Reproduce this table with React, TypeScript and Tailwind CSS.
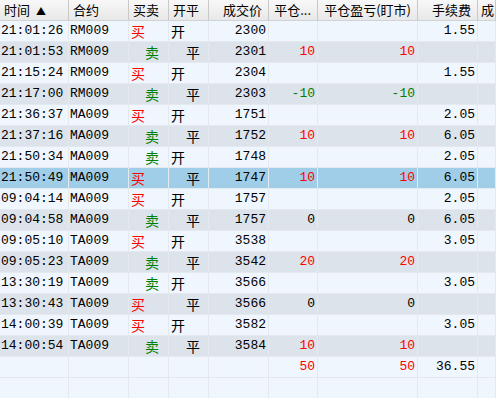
type Trade = {
    time: string;
    code: string;
    side: 'buy' | 'sell';
    open: boolean;
    price: string;
    close?: string;
    pnl?: string;
    fee?: string;
};

const trades: Trade[] = [
    { time: '21:01:26', code: 'RM009', side: 'buy', open: true, price: '2300', fee: '1.55' },
    { time: '21:01:53', code: 'RM009', side: 'sell', open: false, price: '2301', close: '10', pnl: '10' },
    { time: '21:15:24', code: 'RM009', side: 'buy', open: true, price: '2304', fee: '1.55' },
    { time: '21:17:00', code: 'RM009', side: 'sell', open: false, price: '2303', close: '-10', pnl: '-10' },
    { time: '21:36:37', code: 'MA009', side: 'buy', open: true, price: '1751', fee: '2.05' },
    { time: '21:37:16', code: 'MA009', side: 'sell', open: false, price: '1752', close: '10', pnl: '10', fee: '6.05' },
    { time: '21:50:34', code: 'MA009', side: 'sell', open: true, price: '1748', fee: '2.05' },
    { time: '21:50:49', code: 'MA009', side: 'buy', open: false, price: '1747', close: '10', pnl: '10', fee: '6.05' },
    { time: '09:04:14', code: 'MA009', side: 'buy', open: true, price: '1757', fee: '2.05' },
    { time: '09:04:58', code: 'MA009', side: 'sell', open: false, price: '1757', close: '0', pnl: '0', fee: '6.05' },
    { time: '09:05:10', code: 'TA009', side: 'buy', open: true, price: '3538', fee: '3.05' },
    { time: '09:05:23', code: 'TA009', side: 'sell', open: false, price: '3542', close: '20', pnl: '20' },
    { time: '13:30:19', code: 'TA009', side: 'sell', open: true, price: '3566', fee: '3.05' },
    { time: '13:30:43', code: 'TA009', side: 'buy', open: false, price: '3566', close: '0', pnl: '0' },
    { time: '14:00:39', code: 'TA009', side: 'buy', open: true, price: '3582', fee: '3.05' },
    { time: '14:00:54', code: 'TA009', side: 'sell', open: false, price: '3584', close: '10', pnl: '10' },
];

const SELECTED = 7;

const cols = 'grid grid-cols-[69px_60px_40px_40px_60px_49px_100px_60px_1fr]';
const mono = "[font-family:'Liberation_Mono','Noto_Sans_CJK_SC',monospace]";
const cjk = "[font-family:'Noto_Sans_CJK_SC',sans-serif]";

const pnlColor = (v?: string) => {
    if (!v) return '';
    if (v.startsWith('-')) return 'text-[#008000]';
    if (v === '0') return 'text-black';
    return 'text-[#ff0000]';
};

const Cell = ({ children, className = '' }: { children?: React.ReactNode; className?: string }) => (
    <div className={`h-full flex items-center border-r border-[#e4e9ef] overflow-hidden whitespace-nowrap ${className}`}>
        {children}
    </div>
);

export default function App() {
    return (
        <div className="w-[496px] h-[398px] overflow-hidden bg-[#f0f6fd] text-[13px] text-black">
            {/* header */}
            <div className={`${cols} h-[21px] border-b border-[#cfd3d8] bg-gradient-to-b from-[#f8f8f8] to-[#e8e8e8] ${cjk}`}>
                {['时间', '合约', '买卖', '开平', '成交价', '平仓...', '平仓盈亏(盯市)', '手续费', '成'].map((h, i) => (
                    <div
                        key={h}
                        className={`h-full flex items-center border-r border-[#c9c9c9] overflow-hidden whitespace-nowrap ${
                            i < 4 ? 'pl-[4px]' : i === 8 ? 'pl-[3px]' : 'justify-end pr-[6px]'
                        }`}
                    >
                        {h}
                        {i === 0 && <span className="ml-[6px] text-[10px]">▲</span>}
                    </div>
                ))}
            </div>

            {trades.map((t, i) => (
                <div
                    key={t.time}
                    className={`${cols} h-[21px] border-b border-[#e4e9ef] ${mono} ${
                        i === SELECTED ? 'bg-[#a0cde7]' : i % 2 === 1 ? 'bg-[#dde3eb]' : 'bg-[#f0f6fd]'
                    }`}
                >
                    <Cell className="pl-[1px]">{t.time}</Cell>
                    <Cell className="pl-[1px]">{t.code}</Cell>
                    <Cell className={t.side === 'buy' ? 'pl-[2px] text-[#ff0000]' : 'pl-[16px] text-[#008000]'}>
                        <span className={`${cjk} text-[14px]`}>{t.side === 'buy' ? '买' : '卖'}</span>
                    </Cell>
                    <Cell className={t.open ? 'pl-[2px]' : 'pl-[17px]'}>
                        <span className={`${cjk} text-[14px]`}>{t.open ? '开' : '平'}</span>
                    </Cell>
                    <Cell className="justify-end pr-[2px]">{t.price}</Cell>
                    <Cell className={`justify-end pr-[2px] ${pnlColor(t.close)}`}>{t.close}</Cell>
                    <Cell className={`justify-end pr-[2px] ${pnlColor(t.pnl)}`}>{t.pnl}</Cell>
                    <Cell className="justify-end pr-[2px]">{t.fee}</Cell>
                    <Cell />
                </div>
            ))}

            {/* total */}
            <div className={`${cols} h-[21px] border-b border-[#e4e9ef] ${mono}`}>
                <Cell />
                <Cell />
                <Cell />
                <Cell />
                <Cell />
                <Cell className="justify-end pr-[2px] text-[#ff0000]">50</Cell>
                <Cell className="justify-end pr-[2px] text-[#ff0000]">50</Cell>
                <Cell className="justify-end pr-[2px]">36.55</Cell>
                <Cell />
            </div>
            <div className={`${cols} h-[21px]`}>
                <Cell />
                <Cell />
                <Cell />
                <Cell />
                <Cell />
                <Cell />
                <Cell />
                <Cell />
                <Cell />
            </div>
        </div>
    );
}
